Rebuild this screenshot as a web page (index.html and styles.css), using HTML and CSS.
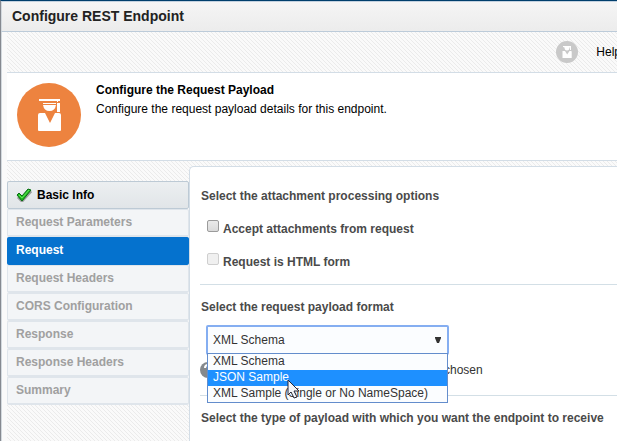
FILE: index.html
```html
<!DOCTYPE html>
<html lang="en">
<head>
<meta charset="utf-8">
<title>Configure REST Endpoint</title>
<link rel="stylesheet" href="styles.css">
</head>
<body>
<div class="dialog">
  <header class="titlebar"><h1>Configure REST Endpoint</h1></header>
  <div class="body">
    <div class="toolbar">
      <svg class="tool-icon" viewBox="0 0 22 22"><circle cx="11" cy="11" r="11" fill="#c9c9c9"/><path d="M7 5h8v4h-1V6.500h-.5q0 3-2.500 3T8.500 6.500L7 6zM6.500 10H9l2.200 3.500L13.500 10H15q.7 0 .7.700V17H6.500z" fill="#fff"/></svg>
      <a class="help" href="#help">Help</a>
    </div>
    <section class="intro">
      <svg class="intro-icon" viewBox="0 0 64 64"><circle cx="32" cy="32" r="32" fill="#ed833f"/><path d="M22 16h21v2H22zM26 20h13v1H26zM26 22h13q-1 6-6.500 6T26 22zM40 18h1v2h2v9h-3v-9h1v-1h-1zM23 30h5l5 10 5-10h4q2 0 2 2v15q0 1-1 1H22q-1 0-1-1V32q0-2 2-2z" fill="#fff"/></svg>
      <div class="intro-text">
        <h2>Configure the Request Payload</h2>
        <p>Configure the request payload details for this endpoint.</p>
      </div>
    </section>
    <div class="main">
      <nav class="steps">
        <button type="button" class="step done">
          <svg class="check" viewBox="0 0 16 14"><path d="M2 9l4 4 9-10" fill="none" stroke="#9a9f9c" stroke-width="3"/><path d="M1 7l2-2 3 3 6-7 3 1-9 11z" fill="#20bf20" stroke="#086b12"/><path d="M3 7l3 3 7-8" fill="none" stroke="#65e35c"/></svg>
          Basic Info
        </button>
        <button type="button" class="step">Request Parameters</button>
        <button type="button" class="step current">Request</button>
        <button type="button" class="step">Request Headers</button>
        <button type="button" class="step">CORS Configuration</button>
        <button type="button" class="step">Response</button>
        <button type="button" class="step">Response Headers</button>
        <button type="button" class="step">Summary</button>
      </nav>
      <form class="panel">
        <section class="group">
          <h3>Select the attachment processing options</h3>
          <div class="option"><input type="checkbox" id="accept"><label for="accept">Accept attachments from request</label></div>
          <div class="option"><input type="checkbox" id="html-form" disabled><label for="html-form">Request is HTML form</label></div>
        </section>
        <section class="group format">
          <h3><label for="payload">Select the request payload format</label></h3>
          <div class="picker">
            <select id="payload"><option>XML Schema</option></select>
            <svg class="arrow" viewBox="0 0 6 7"><path d="M0 0h6v1L4 6H2L0 1z" fill="#333"/></svg>
            <ul class="menu">
              <li>XML Schema</li>
              <li class="active">JSON Sample</li>
              <li>XML Sample (Single or No NameSpace)</li>
            </ul>
            <svg class="pointer" viewBox="0 0 13 20"><path d="M1 1v15l3-3 3 6 3-1-3-6h5z" fill="#f4f5f8" stroke="#252535"/></svg>
          </div>
          <div class="file-row">
            <svg class="hint" viewBox="0 0 16 16"><circle cx="8" cy="8" r="8" fill="#85898c"/><path d="M5 6q0-3 3-3t3 3q0 1-3 3v1M8 12v1" fill="none" stroke="#fff" stroke-width="2"/></svg>
            <span>chosen</span>
          </div>
        </section>
        <section class="group last">
          <h3>Select the type of payload with which you want the endpoint to receive</h3>
        </section>
      </form>
    </div>
  </div>
</div>
</body>
</html>
```
FILE: styles.css
```css
* { box-sizing: border-box; }
body {
  margin: 0;
  overflow: hidden;
  font: 12px/16px "Liberation Sans", Arial, sans-serif;
  color: #000;
}
h1, h2, h3, p, ul { margin: 0; padding: 0; }
h2, h3 { font-size: 12px; line-height: 16px; }
.dialog {
  display: flex;
  flex-direction: column;
  min-height: 100vh;
  border-top: 1px solid #003e6c;
  border-left: 1px solid #858990;
  background: #fafafa;
}
.titlebar {
  height: 31px;
  padding: 6px 10px;
  border-top: 1px solid #c3d1df;
  border-bottom: 1px solid #bccbd9;
  border-left: 1px solid #d3d9de;
  background: linear-gradient(#f5f5f5, #ececec);
}
h1 { font-size: 14px; line-height: 16px; color: #222; }
.body {
  flex: 1;
  display: flex;
  flex-direction: column;
  padding-left: 5px;
  border-left: 1px solid #d3d9de;
}
.toolbar, .main {
  background:
    conic-gradient(from 270deg at 1px 1px, #ebebeb 90deg, transparent 0) 0 0 / 4px 4px,
    conic-gradient(from 270deg at 1px 1px, #ebebeb 90deg, transparent 0) 1px 1px / 4px 4px,
    conic-gradient(from 270deg at 1px 1px, #ebebeb 90deg, transparent 0) 2px 2px / 4px 4px,
    conic-gradient(from 270deg at 1px 1px, #ebebeb 90deg, transparent 0) 3px 3px / 4px 4px,
    #fafafa;
}
.toolbar {
  display: flex;
  align-items: center;
  justify-content: flex-end;
  gap: 18px;
  height: 41px;
  margin-right: -4px;
  border-bottom: 1px solid #d3dde6;
}
.tool-icon { width: 22px; height: 22px; }
.help { color: #000; text-decoration: none; }
.intro {
  display: flex;
  gap: 15px;
  height: 88px;
  padding: 10px;
  border-bottom: 1px solid #d3dde6;
  background: #fff;
}
.intro-icon { flex: none; width: 64px; height: 64px; }
.intro-text { display: grid; gap: 3px; align-content: start; }
.intro h2 { margin-top: -1px; }
.main {
  flex: 1;
  display: grid;
  grid-template-columns: 182px 1fr;
  padding-top: 5px;
}
.steps { padding-top: 15px; }
.step {
  display: flex;
  align-items: center;
  width: 100%;
  height: 28px;
  padding: 0 8px 2px;
  border: 1px solid #dfe5eb;
  border-bottom-width: 2px;
  border-radius: 2px;
  background: #f3f5f7;
  font: bold 12px/16px "Liberation Sans", Arial, sans-serif;
  color: #a0a0a0;
  text-align: left;
}
.step.done {
  gap: 5px;
  padding-bottom: 0;
  border: 1px solid #bdcad5;
  background: linear-gradient(#eceff1, #e1e5e8);
  color: #000;
}
.step.current { border-color: #0572ce; background: #0572ce; color: #fff; }
.check { width: 16px; height: 14px; }
.panel {
  padding: 21px 0 16px 10px;
  border: solid #d3dde6;
  border-width: 1px 0 0 1px;
  border-top-left-radius: 5px;
  background: #fff;
  color: #4a4a4a;
}
.group { border-bottom: 1px solid #d3dfe6; }
.group.last { border: 0; }
.group h3 { margin-left: 1px; white-space: nowrap; }
.option {
  display: flex;
  align-items: center;
  gap: 4px;
  height: 17px;
  margin: 16px 0 16px 7px;
  font-weight: bold;
}
.option:last-child { margin-bottom: 14px; }
.option input {
  appearance: none;
  width: 12px;
  height: 12px;
  margin: 0 0 5px;
  border: 1px solid #9b9b9b;
  border-radius: 2px;
  background: linear-gradient(#eaeaea, #dadada);
}
.option input:disabled { border-color: #cfcfcf; background: #f0f0f0; }
.format { padding: 14px 0 17px; }
.picker { position: relative; width: 243px; margin: 10px 0 7px 6px; }
select {
  appearance: none;
  display: block;
  width: 100%;
  height: 30px;
  padding: 0 5px;
  border: 2px solid #85aef1;
  border-radius: 2px;
  background: #fbfdff;
  font: 12px/16px "Liberation Sans", Arial, sans-serif;
  color: #333;
}
.arrow { position: absolute; top: 12px; right: 8px; width: 6px; height: 7px; }
.menu {
  position: absolute;
  z-index: 1;
  top: 28px;
  left: 1px;
  right: 1px;
  border: 1px solid #638dcc;
  background: #fbfdff;
  color: #333;
  list-style: none;
}
.menu li { height: 16px; padding-left: 5px; line-height: 15px; white-space: nowrap; }
.menu .active { background: #1e90ff; color: #fff; }
.pointer { position: absolute; z-index: 2; top: 54px; left: 81px; width: 13px; height: 20px; }
.file-row { display: flex; align-items: center; gap: 228px; height: 16px; color: #333; }
.hint { width: 16px; height: 16px; }
.last { padding-top: 14px; }
```
